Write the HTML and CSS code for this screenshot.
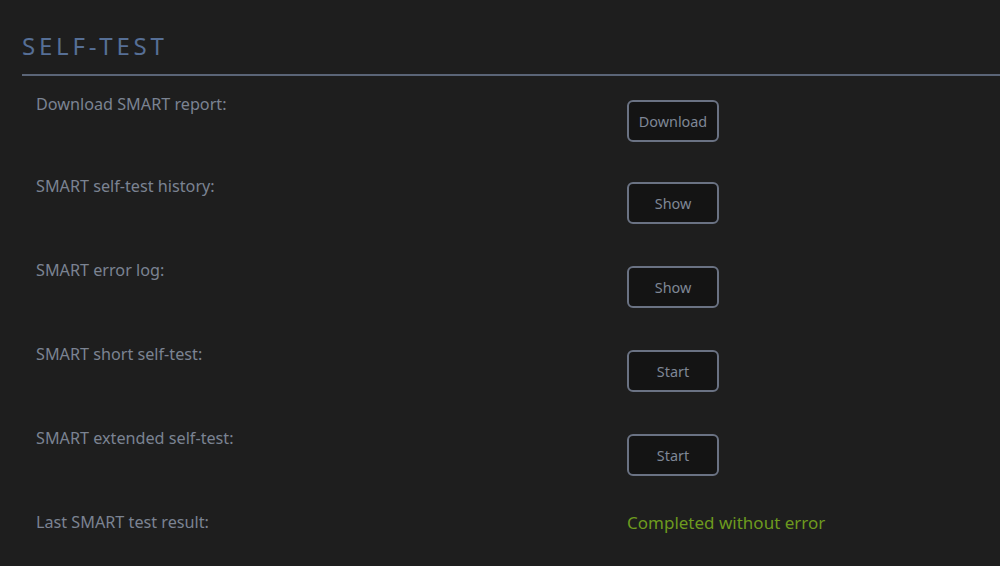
FILE: index.html
```html
<!DOCTYPE html>
<html lang="en">
<head>
<meta charset="utf-8">
<title>Self-test</title>
<link rel="stylesheet" href="styles.css">
</head>
<body>
<section class="panel">
  <h2 class="panel-title">SELF-TEST</h2>
  <div class="rows">
    <div class="row row-first">
      <div class="label">Download SMART report:</div>
      <div class="value"><button class="btn">Download</button></div>
    </div>
    <div class="row">
      <div class="label">SMART self-test history:</div>
      <div class="value"><button class="btn">Show</button></div>
    </div>
    <div class="row">
      <div class="label">SMART error log:</div>
      <div class="value"><button class="btn">Show</button></div>
    </div>
    <div class="row">
      <div class="label">SMART short self-test:</div>
      <div class="value"><button class="btn">Start</button></div>
    </div>
    <div class="row">
      <div class="label">SMART extended self-test:</div>
      <div class="value"><button class="btn">Start</button></div>
    </div>
    <div class="row row-text">
      <div class="label">Last SMART test result:</div>
      <div class="value status-ok">Completed without error</div>
    </div>
  </div>
</section>
</body>
</html>
```
FILE: styles.css
```css
html, body {
  margin: 0;
  padding: 0;
  background: #1e1e1e;
  font-family: "Noto Sans", "Open Sans", sans-serif;
  overflow: hidden;
}

.panel {
  padding: 27px 0 0 22px;
}

.panel-title {
  margin: 0;
  font-size: 24px;
  font-weight: 400;
  letter-spacing: 3.8px;
  color: #566f96;
  line-height: 37px;
  padding-bottom: 10px;
  border-bottom: 2px solid #5b6577;
}

.rows {
  display: flex;
  flex-direction: column;
  padding: 16px 0 0 14px;
}

.row {
  display: grid;
  grid-template-columns: 591px 1fr;
  height: 50px;
  margin-bottom: 34px;
}

.row-first {
  margin-bottom: 32px;
}

.row:last-child {
  margin-bottom: 0;
  height: 30px;
}

.label {
  font-size: 16.2px;
  line-height: 24px;
  color: #7b8392;
}

.value {
  padding-top: 8px;
}

.btn {
  width: 92px;
  height: 42px;
  box-sizing: border-box;
  background: #141414;
  border: 2px solid #6a7283;
  border-radius: 6px;
  color: #7f8796;
  font-family: inherit;
  font-size: 14.4px;
  padding: 0;
  cursor: pointer;
}

.row-text .value {
  padding-top: 0;
  font-size: 17px;
  line-height: 26px;
}

.status-ok {
  color: #6d9a1e;
}
```
